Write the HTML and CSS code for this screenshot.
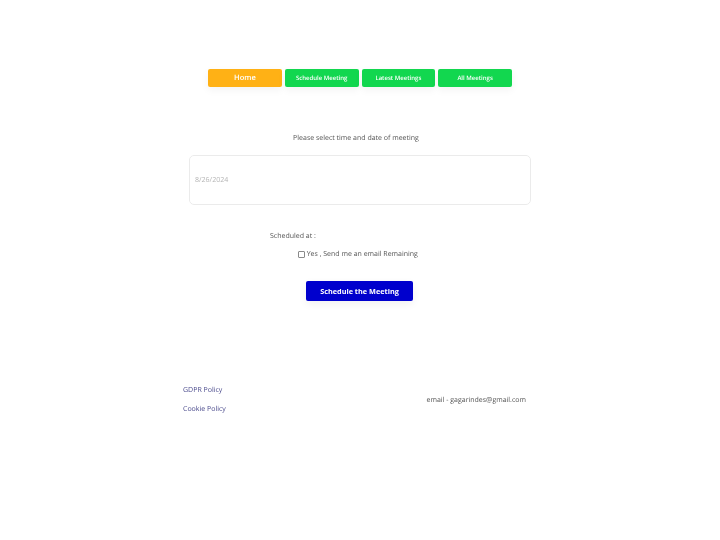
FILE: index.html
```html
<!DOCTYPE html>
<html lang="en">
  <head>
    <meta charset="UTF-8" />
    <title>Schedule Meeting</title>
    <link rel="stylesheet" href="styles.css">
  </head>
  <body>
    <div class="container">
      <div class="nav">
        <a class="nav-btn nav-home">Home</a>
        <a class="nav-btn">Schedule Meeting</a>
        <a class="nav-btn">Latest Meetings</a>
        <a class="nav-btn">All Meetings</a>
      </div>

      <p class="prompt">Please select time and date of meeting</p>
      <div class="date-box">8/26/2024</div>

      <p class="scheduled">Scheduled at :</p>
      <label class="remind">
        <input type="checkbox" />
        <span>Yes , Send me an email Remaining</span>
      </label>

      <button class="submit">Schedule the Meeting</button>

      <div class="footer">
        <div class="policies">
          <a>GDPR Policy</a>
          <a>Cookie Policy</a>
        </div>
        <div class="contact">email - gagarindes@gmail.com</div>
      </div>
    </div>
  </body>
</html>
```

FILE: styles.css
```css
body {
  font-family: "Open Sans", sans-serif;
  background-color: #fff;
  color: #555;
  margin: 0;
  padding: 0;
  text-rendering: geometricPrecision;
}

.container {
  width: 354px;
  margin: 0 auto;
  padding-top: 69px;
  will-change: transform;
}

.nav {
  display: flex;
  justify-content: center;
  gap: 3px;
}

.nav-btn {
  width: 73.75px;
  height: 18px;
  line-height: 19px;
  text-align: center;
  font-size: 6px;
  font-weight: 600;
  color: #fff;
  background-color: #12d74f;
  border-radius: 2px;
  box-shadow: 0 3px 8px rgba(0, 0, 0, 0.05);
}

.nav-home {
  font-size: 7.5px;
  background-color: #ffb115;
}

.prompt {
  margin: 46px 0 0;
  padding-right: 8px;
  font-size: 7px;
  line-height: 12px;
  text-align: center;
}

.date-box {
  box-sizing: border-box;
  width: 342px;
  height: 50px;
  margin: 10px auto 0;
  padding-left: 5px;
  line-height: 50px;
  font-size: 7px;
  color: #b5b5b5;
  border: 1px solid #ebebeb;
  border-radius: 5px;
}

.scheduled {
  margin: 26px 0 0 87px;
  font-size: 7px;
  line-height: 12px;
}

.remind {
  display: flex;
  align-items: center;
  justify-content: center;
  gap: 1.5px;
  margin-top: 5.5px;
  padding-right: 4px;
  font-size: 7px;
  line-height: 12px;
}

.remind input {
  appearance: none;
  box-sizing: border-box;
  width: 7px;
  height: 7px;
  margin: 0 0 1px;
  background-color: #fff;
  border: 1px solid #8a8a8a;
  border-radius: 1px;
}

.submit {
  display: block;
  width: 107px;
  height: 20px;
  margin: 20.5px 0 0 123px;
  padding: 0;
  font-family: inherit;
  font-size: 7.3px;
  font-weight: 700;
  color: #fff;
  background-color: #0000cd;
  border: none;
  border-radius: 2px;
  box-shadow: 0 3px 8px rgba(0, 0, 0, 0.06);
}

.footer {
  display: flex;
  justify-content: space-between;
  align-items: center;
  margin-top: 84px;
  padding-right: 11px;
  font-size: 7px;
}

.policies {
  display: flex;
  flex-direction: column;
  gap: 8px;
}

.policies a {
  line-height: 11px;
  color: #4a4a8c;
}
```
